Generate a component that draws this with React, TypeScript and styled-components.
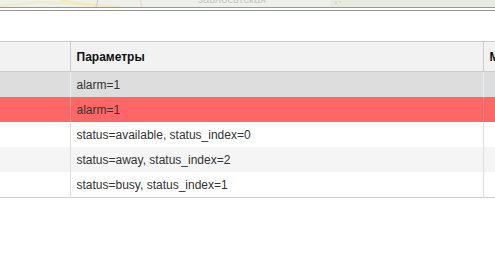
import styled, { createGlobalStyle } from 'styled-components'

const GlobalStyle = createGlobalStyle`
  html, body {
    margin: 0;
    padding: 0;
    background: #fff;
    font-family: Arial, "Liberation Sans", sans-serif;
  }
`

type RowKind = 'selected' | 'alarm' | 'plain' | 'striped'

const rows: { kind: RowKind; params: string }[] = [
  { kind: 'selected', params: 'alarm=1' },
  { kind: 'alarm', params: 'alarm=1' },
  { kind: 'plain', params: 'status=available, status_index=0' },
  { kind: 'striped', params: 'status=away, status_index=2' },
  { kind: 'plain', params: 'status=busy, status_index=1' },
]

const rowBg: Record<RowKind, string> = {
  selected: '#dddddd',
  alarm: '#ff6666',
  plain: '#ffffff',
  striped: '#f5f5f5',
}

const rowDivider: Record<RowKind, string> = {
  selected: '#e4eef6',
  alarm: '#ff8c8c',
  plain: '#dddddd',
  striped: '#dddddd',
}

export default function App() {
  return (
    <>
      <GlobalStyle />
      <Page>
        <MapStrip>
          <svg width="495" height="7" viewBox="0 0 495 7">
            <rect width="495" height="7" fill="#eef1ea" />
            <path d="M0 6 L40 2 L90 5" stroke="#f3eacc" strokeWidth="2" fill="none" />
            <path d="M60 0 Q80 4 120 7" stroke="#f6e9b8" strokeWidth="2" fill="none" />
            <path d="M140 0 L142 7" stroke="#f1d8d0" strokeWidth="1.5" fill="none" />
            <rect x="330" y="0" width="165" height="7" fill="#e5ede1" />
            <path d="M98 0 L96 7" stroke="#c8c8c8" strokeWidth="1" fill="none" />
            <text x="198" y="3" fontSize="11" fill="#c2c7c0" fontFamily="Arial, sans-serif">
              завлосвтская
            </text>
            <circle cx="336" cy="3" r="1.5" fill="#d8d8d8" />
            <circle cx="340" cy="2" r="1" fill="#d8d8d8" />
          </svg>
        </MapStrip>
        <DoubleRule />
        <TableArea>
          <Grid>
            <colgroup>
              <col style={{ width: 70 }} />
              <col style={{ width: 413 }} />
              <col style={{ width: 80 }} />
            </colgroup>
            <thead>
              <tr>
                <HeadCell />
                <HeadCell>Параметры</HeadCell>
                <HeadCell>Метка</HeadCell>
              </tr>
            </thead>
            <tbody>
              {rows.map((r, i) => (
                <BodyRow key={i} $kind={r.kind}>
                  <BodyCell $kind={r.kind} />
                  <BodyCell $kind={r.kind}>{r.params}</BodyCell>
                  <BodyCell $kind={r.kind} />
                </BodyRow>
              ))}
            </tbody>
          </Grid>
        </TableArea>
      </Page>
    </>
  )
}

const Page = styled.div`
  width: 495px;
  height: 280px;
  overflow: hidden;
  background: #fff;
`

const MapStrip = styled.div`
  height: 7px;
  overflow: hidden;

  svg {
    display: block;
  }
`

const DoubleRule = styled.div`
  height: 2px;
  border-top: 1px solid #999;
  border-bottom: 1px solid #999;
`

const TableArea = styled.div`
  padding-top: 30px;
  width: 495px;
  overflow: hidden;
`

const Grid = styled.table`
  width: 563px;
  table-layout: fixed;
  border-collapse: collapse;
  font-size: 12px;
  color: #333;
  border-top: 1px solid #cccccc;
  border-bottom: 1px solid #cccccc;
`

const HeadCell = styled.th`
  height: 29px;
  padding: 0 0 0 6px;
  background: #f2f2f2;
  border-bottom: 1px solid #cccccc;
  border-right: 1px solid #cccccc;
  text-align: left;
  font-weight: bold;
  color: #111;
  white-space: nowrap;
  overflow: hidden;
`

const BodyRow = styled.tr<{ $kind: RowKind }>`
  background: ${(p) => rowBg[p.$kind]};
`

const BodyCell = styled.td<{ $kind: RowKind }>`
  height: 25px;
  padding: 0 0 0 6px;
  border-right: 1px solid ${(p) => rowDivider[p.$kind]};
  white-space: nowrap;
  overflow: hidden;
`
